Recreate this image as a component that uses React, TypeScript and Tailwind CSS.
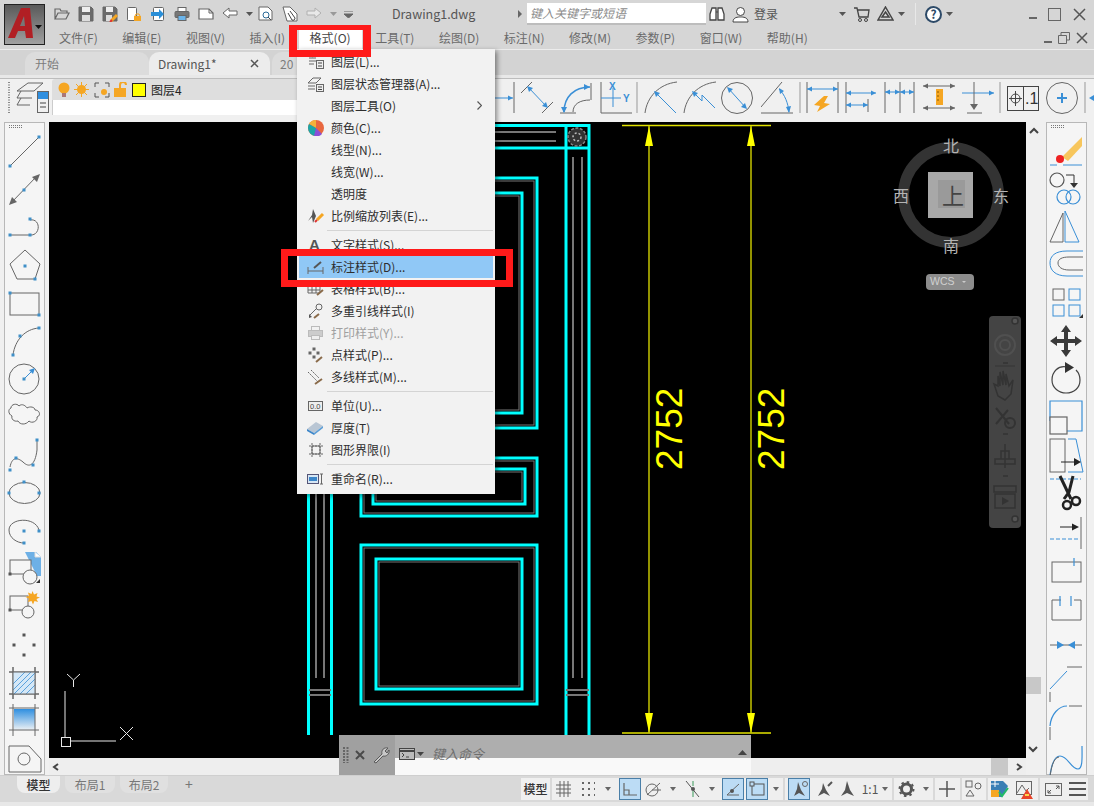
import React from "react";

const G = "#666666";
const B = "#3a8fd6";
const O = "#f5a623";

function H({ x, y, c = "#3f8fc8" }: { x: number; y: number; c?: string }) {
  return <rect x={x - 1.5} y={y - 1.5} width={3} height={3} fill={c} stroke="none" />;
}

function Ic({ w, h, children }: { w: number; h: number; children: React.ReactNode }) {
  return (
    <svg width={w} height={h} viewBox={`0 0 ${w} ${h}`} fill="none" stroke={G} strokeWidth={1} className="block shrink-0">
      {children}
    </svg>
  );
}

function Caret({ c = "#555" }: { c?: string }) {
  return (
    <svg width={7} height={4} viewBox="0 0 7 4" className="block shrink-0">
      <path d="M0 0H7L3.5 4Z" fill={c} />
    </svg>
  );
}

function ArrowH({ x1, x2, y, c = B, both = true }: { x1: number; x2: number; y: number; c?: string; both?: boolean }) {
  return (
    <g>
      <path d={`M${x1} ${y}H${x2}`} stroke={c} />
      <path d={`M${x2} ${y}l-5 -2.5v5Z`} fill={c} stroke="none" />
      {both && <path d={`M${x1} ${y}l5 -2.5v5Z`} fill={c} stroke="none" />}
    </g>
  );
}

const quick: React.ReactNode[] = [
  <Ic w={16} h={16}><path d="M1 13V3h5l1 2h6v2M1 13l3-6h11l-3 6Z" strokeWidth={1.2} /></Ic>,
  <Ic w={16} h={16}><path d="M1 1h12l2 2v12H1Z" fill="#6b6b6b" /><rect x={4} y={1} width={8} height={5} fill="#eee" stroke="none" /><rect x={4} y={9} width={8} height={6} fill="#ddd" stroke="none" /></Ic>,
  <Ic w={16} h={16}><path d="M1 1h12l2 2v12H1Z" fill="#6b6b6b" /><rect x={4} y={1} width={7} height={5} fill="#eee" stroke="none" /><rect x={4} y={9} width={6} height={6} fill="#ddd" stroke="none" /><path d="M9 15l6-6" stroke={O} strokeWidth={3} /><path d="M8 16l2-2" stroke="#d33" strokeWidth={2} /></Ic>,
  <Ic w={16} h={16}><rect x={1.5} y={1.5} width={9} height={13} rx={1} fill="#fff" /><path d="M8 10h7v5H8Z" fill={O} stroke="none" /><path d="M9 10l1-2h3l1 2" stroke={O} /></Ic>,
  <Ic w={16} h={16}><rect x={3.5} y={1.5} width={10} height={13} rx={1} fill="#fff" /><path d="M1 6h8V3l5 5-5 5v-3H1Z" fill="#2b8fd8" stroke="none" /></Ic>,
  <Ic w={16} h={16}><rect x={4} y={1.5} width={8} height={4} fill="#fff" /><rect x={1} y={5.5} width={14} height={6} rx={1} fill="#777" /><rect x={4} y={9.5} width={8} height={5} fill="#6bb4ea" stroke="#666" /></Ic>,
  <Ic w={16} h={16}><path d="M1 3h10l4 4v6H1Z" fill="#fff" strokeWidth={1.2} /><path d="M11 3v4h4" /></Ic>,
  <Ic w={16} h={16}><path d="M7 2L1 7l6 5V9h8V5H7Z" fill="#fff" /></Ic>,
];

function Pointer() {
  return (
    <svg width={4} height={8} viewBox="0 0 4 8" className="block shrink-0"><path d="M0 0L4 4L0 8Z" fill="#666" /></svg>
  );
}

const menuItems: { t?: string; kind?: string; y?: string; icon?: React.ReactNode; dis?: boolean; sub?: boolean; hi?: boolean }[] = [
  { t: "图层(L)...", icon: <Ic w={18} h={16}><path d="M2 4h7M2 7h7M2 10h5M5 3l4-2" /><rect x={9.5} y={6.5} width={7} height={8} fill="#eee" /><path d="M11 9h4M11 12h4" stroke="#444" /></Ic> },
  { t: "图层状态管理器(A)...", icon: <Ic w={18} h={16}><path d="M1 7l5-5h8l-5 5ZM1 10h7M1 13h7" /><rect x={9.5} y={8.5} width={7} height={7} fill="#eee" /><path d="M11 11h4M11 13.5h4" stroke="#444" /></Ic> },
  { t: "图层工具(O)", sub: true },
  { t: "颜色(C)...", icon: <svg width={16} height={16} viewBox="0 0 16 16" className="block"><circle cx={8} cy={8} r={8} fill="#e8673f" /><path d="M8 8L1 4A8 8 0 0 1 8 0Z" fill="#f3b13a" /><path d="M8 8V16A8 8 0 0 1 0 8A8 8 0 0 1 1 4Z" fill="#1ca6a8" /><path d="M8 8L14 14A8 8 0 0 1 6 16Z" fill="#8a4fd8" /></svg> },
  { t: "线型(N)..." },
  { t: "线宽(W)..." },
  { t: "透明度" },
  { t: "比例缩放列表(E)...", icon: <Ic w={18} h={16}><path d="M6 1L9 8L6 15L5 9L1 13L5 7Z" fill="#555" stroke="none" /><path d="M10 12l6-6" stroke={O} strokeWidth={3} /><path d="M8 14l2-2" stroke="#d33" strokeWidth={2} /></Ic> },
  { kind: "sep" },
  { t: "文字样式(S)...", icon: <Ic w={18} h={16}><text x={2} y={13} fontSize={15} fontWeight={700} fill="#555" stroke="none" fontFamily="Liberation Sans">A</text></Ic> },
  { t: "标注样式(D)...", hi: true, icon: <Ic w={18} h={16}><path d="M1 8v7M16 8v7M1 12h15" /><path d="M7 9l7-6" stroke="#555" strokeWidth={2} /></Ic> },
  { t: "表格样式(B)...", icon: <Ic w={18} h={16}><path d="M1 2h12v10H1ZM1 5.5h12M1 9h12M5 2v10M9 2v10" /><path d="M10 14l6-5" stroke="#8a6b4a" strokeWidth={2} /></Ic> },
  { t: "多重引线样式(I)", icon: <Ic w={18} h={16}><circle cx={12} cy={4} r={3} /><path d="M9 6L2 13" /><path d="M2 15v-4l3 3Z" fill="#555" stroke="none" /><path d="M7 15l5-4" stroke="#8a6b4a" strokeWidth={2} /></Ic> },
  { t: "打印样式(Y)...", dis: true, icon: <Ic w={18} h={16}><g stroke="#bbb"><rect x={4.5} y={1.5} width={8} height={4} /><rect x={1.5} y={5.5} width={14} height={6} fill="#ccc" /><rect x={4.5} y={10.5} width={8} height={4} fill="#eee" /></g></Ic> },
  { t: "点样式(P)...", icon: <Ic w={18} h={16}><H x={7} y={2} c="#666" /><H x={3} y={6} c="#666" /><H x={11} y={6} c="#666" /><H x={7} y={10} c="#666" /><path d="M9 15l6-5" stroke="#8a6b4a" strokeWidth={2} /></Ic> },
  { t: "多线样式(M)...", icon: <Ic w={18} h={16}><path d="M1 3l10 10M4 1l8 8" strokeDasharray="2 1" /><path d="M8 15l7-5" stroke="#8a6b4a" strokeWidth={2} /></Ic> },
  { kind: "sep" },
  { t: "单位(U)...", icon: <Ic w={16} h={12}><rect x={0.5} y={1.5} width={14} height={9} fill="#eee" /><text x={2} y={9} fontSize={7.5} fill="#444" stroke="none" fontFamily="Liberation Sans">0.0</text></Ic> },
  { t: "厚度(T)", icon: <svg width={17} height={14} viewBox="0 0 17 14" className="block"><path d="M0 8L9 1L16 5L7 12Z" fill="#b9c6d4" /><path d="M0 8V10L7 14V12Z" fill="#3c86c9" /><path d="M7 12V14L16 7V5Z" fill="#5b9dd6" /></svg> },
  { t: "图形界限(I)", icon: <Ic w={16} h={16}><rect x={4} y={4} width={8} height={8} /><path d="M4 1v14M12 1v14M1 4h14M1 12h14" strokeDasharray="2 1" /></Ic> },
  { kind: "sep" },
  { t: "重命名(R)...", icon: <Ic w={17} h={12}><rect x={0.5} y={1.5} width={11} height={9} fill="#d6e6f4" stroke="#557" /><rect x={2} y={4} width={8} height={4} fill="#3c86c9" stroke="none" /><path d="M13 1h3M13 11h3M14.500 1v10" /></Ic> },
];

function Menu() {
  return (
    <div className="absolute left-[297px] top-[49px] w-[198px] h-[445px] bg-[#f2f2f2] shadow-[2px_2px_5px_rgba(0,0,0,0.45)] pt-[2px] z-20">
      {menuItems.map((m, i) =>
        m.kind === "sep" ? (
          <div key={i} className="h-[1px] bg-[#d4d4d4] ml-[30px] mr-[2px] my-[3px]" />
        ) : (
          <div key={i} className={`relative flex items-center h-[22px] mx-[2px] text-[12px] ${m.hi ? "bg-[#90c8f6]" : ""} ${m.dis ? "text-[#a0a0a0]" : "text-[#2e2e2e]"}`}>
            <div className="w-[32px] flex justify-center pl-[1px] shrink-0">{m.icon}</div>
            <span className="whitespace-nowrap">{m.t}</span>
            {m.sub && (
              <svg width={5} height={9} viewBox="0 0 5 9" fill="none" stroke="#555" strokeWidth={1.2} className="absolute right-[11px] top-[6px] block"><path d="M.5 .5L4.500 4.500L.5 8.500" /></svg>
            )}
          </div>
        )
      )}
    </div>
  );
}

const leftIcons: React.ReactNode[] = [
  <><path d="M5 34L34 5" /><H x={5} y={34} /><H x={34} y={5} /></>,
  <><path d="M6 33L32 6" /><path d="M4 35l3-8 5 5Z M35 4l-8 3 5 5Z" fill={G} stroke="none" /><H x={19} y={20} /></>,
  <><path d="M5 27H25M25 12C36 10 36 28 25 27" /><H x={5} y={27} /><H x={25} y={27} /><H x={25} y={11} /></>,
  <><path d="M20 4L35 18L30 33H12L5 18Z" /><H x={20} y={20} /><H x={30} y={33} /></>,
  <><rect x={5} y={9} width={29} height={22} /><H x={5} y={9} /><H x={34} y={31} /></>,
  <><path d="M34 6C20 7 10 18 8 33" /><H x={34} y={6} /><H x={15} y={14} /><H x={8} y={33} /></>,
  <><circle cx={19} cy={19} r={15} /><path d="M19 19L29 9" stroke={B} /><path d="M30 8l-6 2 4 4Z" fill={B} stroke="none" /><H x={19} y={19} /></>,
  <path d="M6 10C6 6 12 5 14 8C17 5 21 8 22 10C25 8 30 9 30 12C35 12 36 18 32 19C33 23 27 26 24 23C21 27 15 27 13 23C9 24 6 21 7 18C3 16 3 11 6 10Z" />,
  <><path d="M5 35C7 25 12 25 18 30C24 36 30 34 32 18V8" transform="translate(0,-4)" /><H x={32} y={4} /><H x={11} y={22} /><H x={28} y={29} /><H x={5} y={34} /></>,
  <><ellipse cx={19.500} cy={19} rx={15.500} ry={10.500} /><H x={19} y={8} /><H x={4} y={19} /><H x={34} y={19} /></>,
  <><path d="M34 18C30 4 4 6 4 18C4 26 12 31 19 31" /><H x={19} y={19} /><H x={34} y={19} /><H x={19} y={31} /></>,
  <><path d="M20 2H31L36 7V26L32 26" fill="#6db0e6" stroke="none" /><path d="M30 2V7H36" fill="#fff" stroke="#ddd" /><rect x={5} y={10} width={21} height={14} fill="#f5f5f5" /><circle cx={25} cy={27} r={7} fill="#f5f5f5" /><H x={5} y={24} c="#555" /><path d="M35 33h-4l4-4Z" fill="#333" stroke="none" /></>,
  <><rect x={5} y={8} width={18} height={14} /><circle cx={23} cy={24} r={6} fill="#f5f5f5" /><H x={5} y={22} c="#555" /><path d="M27.500 3l1.500 3.500 3.500-1.500-1 3.500 3.500 1-3.500 1.500 1.500 3-3.500-1-1.500 3.500-1.500-3.500-3.500 1 1-3.500-3.500-1.500 3.500-1-1-3.500 3.500 1.500Z" fill={O} stroke="none" /></>,
  <><H x={19} y={9} c="#555" /><H x={9} y={19} c="#555" /><H x={29} y={19} c="#555" /><H x={19} y={29} c="#555" /></>,
  <><path d="M8 3V35M30 3V35M4 8H34M4 30H34" /><rect x={8} y={8} width={22} height={22} fill="#d5e8f7" stroke="none" /><path d="M8 20L20 8M8 26L26 8M9 30L30 9M15 30L30 15M21 30L30 21" stroke={B} strokeWidth={0.8} /><path d="M8 3V35M30 3V35M4 8H34M4 30H34" /></>,
  <><defs><linearGradient id="gr" x1="0" y1="0" x2="0" y2="1"><stop offset="0" stopColor="#2f8fe0" /><stop offset="1" stopColor="#f5f5f5" /></linearGradient></defs><rect x={9} y={7} width={21} height={22} fill="url(#gr)" stroke="none" /><path d="M8 2V34M30 2V34M4 6H34M4 28H34" /></>,
  <><path d="M4 6H24L36 19V32H4Z" /><circle cx={19} cy={19} r={6} /></>,
];

const rightIcons: React.ReactNode[] = [
  <><path d="M3 33H10M16 33H35" stroke={B} /><path d="M15 25L35 5V14L21 29Z" fill="#f7c65c" stroke="none" /><circle cx={13} cy={27} r={4} fill="#e22" stroke="none" /></>,
  <><circle cx={10} cy={10} r={7} strokeWidth={1.2} stroke="#555" /><path d="M19 5H27V14" stroke="#333" /><path d="M23 13h8l-4 5Z" fill="#333" stroke="none" /><circle cx={17} cy={27} r={7} stroke={B} strokeWidth={1.2} /><circle cx={26} cy={27} r={7} stroke={B} strokeWidth={1.2} /></>,
  <><path d="M3 34L16 5V34Z" /><path d="M18 3V34H32Z" stroke={B} /></>,
  <><path d="M36 5H20C8 5 3 10 3 17C3 24 8 30 20 30H36" stroke={B} /><path d="M36 11H22C15 11 11 13 11 17C11 21 15 24 22 24H36" /></>,
  <><rect x={6} y={5} width={11} height={11} /><rect x={22} y={5} width={11} height={11} stroke={B} /><rect x={6} y={21} width={11} height={11} stroke={B} /><rect x={22} y={21} width={11} height={11} stroke={B} /><path d="M36 34h-4l4-4Z" fill="#333" stroke="none" /></>,
  <><path d="M19 3L14 10H17V17H10V14L3 19L10 24V21H17V28H14L19 35L24 28H21V21H28V24L35 19L28 14V17H21V10H24Z" fill="#3a3a3a" stroke="none" /></>,
  <><path d="M20 7C11 5 5 12 5 20C5 28 12 33 19 33C27 33 33 28 33 20C33 16 31 12 29 10" stroke="#444" strokeWidth={1.200} /><path d="M18 2V13L27 7.500Z" fill="#333" stroke="none" /></>,
  <><path d="M3 23V3H35V33H19" stroke={B} strokeWidth={1.200} /><rect x={3} y={19} width={17} height={17} fill="#f5f5f5" strokeWidth={1.200} /></>,
  <><rect x={3} y={3} width={15} height={33} /><path d="M21 3H29L36 36H21" stroke={B} /><path d="M14 26H30" stroke="#222" /><path d="M34 26l-7-4v8Z" fill="#222" stroke="none" /></>,
  <><path d="M3 5H34" stroke={B} strokeDasharray="4 2" /><path d="M13 2L24 25M26 2L22 18L17 25" stroke="#222" strokeWidth={3} /><circle cx={20} cy={31} r={4} stroke="#222" strokeWidth={2.500} /><circle cx={29} cy={27} r={4} stroke="#222" strokeWidth={2.500} /></>,
  <><path d="M3 27H33" stroke={B} strokeDasharray="4 2" /><path d="M13 15H28" stroke="#222" /><path d="M32 15l-7-3.500v7Z" fill="#222" stroke="none" /><path d="M34 5V37" /></>,
  <><rect x={5} y={12} width={29} height={20} /><path d="M27 8V16" stroke={B} strokeWidth={1.200} /></>,
  <><path d="M14 12H5V32H34V12H27" /><path d="M13 8V18M24 8V18" stroke={B} strokeWidth={1.200} /></>,
  <><path d="M3 19H35" /><path d="M10 15l7 4-7 4ZM28 15l-7 4 7 4Z" fill={B} stroke="none" /></>,
  <><path d="M3 28V39" /><path d="M3 25L20 7" stroke={B} /><path d="M20 3H35" /></>,
  <><path d="M3 25V38" /><path d="M3 24C4 12 12 4 20 4" stroke={B} strokeWidth={1.200} /><path d="M22 4H35" /></>,
  <><path d="M3 36C4 28 6 16 13 16C21 16 24 29 31 29C36 29 35 16 35 6" stroke={B} strokeWidth={1.200} /><path d="M3 37C4 29 6 18 12 17" /></>,
];

function Grip() {
  return (
    <svg width={14} height={3} viewBox="0 0 14 3" className="block ml-[4px] mt-[2px]">
      <path d="M0 .5H14M0 2.500H14" stroke="#777" strokeDasharray="1 1" />
    </svg>
  );
}

function Toolbar({ icons }: { icons: React.ReactNode[] }) {
  return (
    <div className="w-[41px] h-[653px] bg-[#f5f5f5] border border-[#b8b8b8] shrink-0">
      <div className="h-[7px]"><Grip /></div>
      {icons.map((n, i) => (
        <Ic key={i} w={39} h={38}>{n}</Ic>
      ))}
    </div>
  );
}

const ribbon: [number, React.ReactNode][] = [
  [26, <><ArrowH x1={0} x2={18} y={19} both={false} /><path d="M19 3V34" /></>],
  [39, <><path d="M0 14L11 3M21 34L32 23" /><path d="M7 8L26 28" stroke={B} /><path d="M6 7l6 2-4 4ZM27 29l-6-2 4-4Z" fill={B} stroke="none" /></>],
  [40, <><path d="M4 33C4 18 14 8 30 8" stroke={B} strokeWidth={1.500} /><path d="M13 33C13 25 20 21 30 21M31 4V21M0 34H16" /><path d="M30 8l-6-3v6ZM4 34l-3-6h6Z" fill={B} stroke="none" /></>],
  [44, <><path d="M1 3V34H32" /><path d="M13 9V28M1 19H21" stroke={B} /><text x={9} y={11} fontSize={10} fontWeight={700} fill={B} stroke="none" fontFamily="Liberation Sans">X</text><text x={23} y={23} fontSize={10} fontWeight={700} fill={B} stroke="none" fontFamily="Liberation Sans">Y</text><path d="M37 3V34" stroke="#999" /></>],
  [39, <><path d="M1 34C3 18 15 5 33 3" /><path d="M11 13L32 34" stroke={B} /><path d="M10 12l6 2-4 4Z" fill={B} stroke="none" /></>],
  [38, <><path d="M1 34C3 18 15 5 33 3" /><path d="M10 13L19 22L19 16L32 29" stroke={B} /><path d="M9 12l6 2-4 4Z" fill={B} stroke="none" /></>],
  [40, <><circle cx={16} cy={19} r={15.500} /><path d="M7 9L25 29" stroke={B} /><path d="M6 8l6 2-4 4ZM26 30l-6-2 4-4Z" fill={B} stroke="none" /></>],
  [45, <><path d="M0 28L21 3M0 34H32" /><path d="M18 10C24 16 27 24 28 33" stroke={B} /><path d="M18 9l1 6 4-3ZM28 34l-3-6 5-1Z" fill={B} stroke="none" /><path d="M39 3V34" stroke="#999" /></>],
  [39, <><path d="M1 3V34M32 3V34" /><ArrowH x1={1} x2={32} y={10} /><path d="M18 17L8 26L14 27L11 33L24 25L18 24L22 17Z" fill={O} stroke="none" /></>],
  [39, <><path d="M1 3V34M23 20V33" /><ArrowH x1={1} x2={31} y={14} /><ArrowH x1={1} x2={23} y={26} /></>],
  [39, <><path d="M1 3V34M16 3V34M30 3V34" /><ArrowH x1={1} x2={16} y={13} /><ArrowH x1={16} x2={30} y={13} /></>],
  [39, <><ArrowH x1={0} x2={32} y={7} c="#666" /><ArrowH x1={0} x2={32} y={29} c="#666" /><rect x={13} y={10} width={7} height={16} fill={O} stroke="none" /><path d="M14 13h2M14 17h2M14 21h2" stroke="#8a5a00" /></>],
  [45, <><ArrowH x1={0} x2={32} y={14} both={false} /><path d="M12 3V26" /><path d="M12 31l-4-6h8Z" fill={G} stroke="none" /><path d="M5 34H20" /><path d="M38 3V34" stroke="#999" /></>],
  [39, <><rect x={0.500} y={7.500} width={31} height={24} stroke="#444" /><path d="M16.500 8V31" stroke="#444" /><circle cx={8.500} cy={19.500} r={4.500} stroke="#444" /><path d="M8.500 12V27M2 19.500H15" stroke="#444" /><text x={18} y={25} fontSize={16} fill="#333" stroke="none" fontFamily="Liberation Sans">.1</text></>],
  [41, <><circle cx={16} cy={19} r={15.500} /><path d="M16 14V24M11 19H21" stroke={B} strokeWidth={2} /><path d="M39 3V34" stroke="#999" /></>],
  [7, <path d="M2 19l5-3v6Z" fill={B} stroke="none" />],
];

function Canvas() {
  const cy = "#00ffff";
  const rect = (x: number, y: number, w: number, h: number, k: number) => (
    <g key={`${x}-${y}`}>
      <rect x={x} y={y} width={w} height={h} stroke={cy} strokeWidth={3} fill="none" />
      <rect x={x + k} y={y + k} width={w - 2 * k} height={h - 2 * k} stroke="#777" strokeWidth={1} fill="none" />
    </g>
  );
  return (
    <svg viewBox="49 122 977 636" width={977} height={636} className="block" fontFamily="'Noto Sans CJK SC', sans-serif">
      <rect x={49} y={122} width={977} height={636} fill="#000" />
      {/* door frame */}
      <g fill="none">
        <path d="M400 125.500H589V735M566 125V735M400 148H589M308.500 400V735M331.500 400V735" stroke={cy} strokeWidth={3} />
        <path d="M400 132H556M400 141H556M573 157V678M582 157V678M316 480V678M324 480V678M566 690H589M566 695H589M309 690H331M309 695H331" stroke="#777" strokeWidth={2} />
        <circle cx={577} cy={137} r={9} stroke="#888" strokeWidth={1.500} strokeDasharray="3 1.500" fill="#333" />
        <circle cx={577} cy={137} r={4} stroke="#bbb" strokeWidth={1.500} strokeDasharray="2 2" />
        {rect(361, 178, 176, 250, 3)}
        {rect(376, 193, 146, 220, 3)}
        {rect(361, 458, 176, 58, 3)}
        {rect(373, 469, 152, 35, 3)}
        {rect(361, 545, 176, 159, 3)}
        {rect(376, 559, 146, 130, 3)}
      </g>
      {/* dimensions */}
      <path d="M622 125.500H771M622 733H771" stroke="#e2e200" strokeWidth={1.500} />
      <path d="M649 126V733M751 126V733" stroke="#c4c400" strokeWidth={1.500} />
      <path d="M649 126l-4 20h8ZM751 126l-4 20h8ZM649 733l-4-20h8ZM751 733l-4-20h8Z" fill="#ffff00" />
      <text transform="translate(682 470) rotate(-90)" fontSize={37} fill="#ffff00" fontFamily="'Liberation Sans', sans-serif">2752</text>
      <text transform="translate(784 470) rotate(-90)" fontSize={37} fill="#ffff00" fontFamily="'Liberation Sans', sans-serif">2752</text>
      {/* view cube */}
      <circle cx={951} cy={195} r={47.500} stroke="#333" strokeWidth={11} fill="none" />
      <rect x={928} y={172} width={45} height={46} fill="#a8a8a8" />
      <rect x={938} y={180} width={27} height={28} fill="#9a9a9a" />
      <text x={942} y={204} fontSize={22} fill="#444">上</text>
      <g fontSize={16} fill="#b4b4b4" textAnchor="middle">
        <text x={951} y={152}>北</text>
        <text x={951} y={252}>南</text>
        <text x={901} y={202}>西</text>
        <text x={1001} y={202}>东</text>
      </g>
      <rect x={926} y={274} width={48} height={16} rx={4} fill="#8c8c8c" />
      <text x={930} y={285} fontSize={10.500} fill="#d0d0d0" fontFamily="'Liberation Sans', sans-serif">WCS</text>
      <path d="M962 281h4l-2 2Z" fill="#ccc" />
      {/* UCS */}
      <g stroke="#e8e8e8" strokeWidth={1} fill="none">
        <path d="M65 691V737M71 741H116" />
        <rect x={61.500} y={737.500} width={9} height={9} />
        <path d="M120 727L133 740M133 727L120 740M67 674L73.500 680L80 674M73.500 680V687" />
      </g>
    </svg>
  );
}

function NavBar() {
  return (
    <div className="absolute left-[940px] top-[194px] w-[32px] h-[212px] bg-[#444444] rounded-[4px]">
      <svg width={32} height={212} viewBox="0 0 32 212" fill="none" stroke="#2d2d2d" strokeWidth={1.500}>
        <circle cx={26} cy={5} r={3} fill="#555" stroke="#333" />
        <circle cx={16} cy={29} r={10} stroke="#505050" strokeWidth={2} />
        <circle cx={16} cy={29} r={5} stroke="#505050" strokeWidth={2} />
        <path d="M14 47h5" stroke="#333" />
        <path d="M6 50H26" stroke="#3a3a3a" />
        <path d="M9 80L5 68L9 70V60L11 70V56L14 69V55L17 69V58L20 70L24 64L22 78L16 84Z" stroke="#333" fill="#444" />
        <path d="M7 92L20 108M7 108L19 94" stroke="#333" strokeWidth={2} />
        <circle cx={21} cy={107} r={5} stroke="#333" strokeWidth={2} />
        <path d="M14 118h5" stroke="#333" />
        <path d="M16 128V152M6 143H26V148H6ZM12 135H20V143H12Z" stroke="#333" />
        <path d="M14 160h5" stroke="#333" />
        <rect x={5} y={170} width={22} height={6} stroke="#333" />
        <rect x={6} y={178} width={20} height={14} stroke="#333" />
        <path d="M13 181l7 4-7 4Z" fill="#333" stroke="none" />
        <circle cx={26} cy={203} r={3} fill="#555" stroke="#333" />
      </svg>
    </div>
  );
}

function CommandLine() {
  return (
    <div className="absolute left-[339px] top-[735px] w-[412px] h-[40px] flex z-10">
      <div className="w-[56px] h-full bg-[#a0a0a0] flex items-start pt-[12px] pl-[4px] gap-[6px]">
        <svg width={6} height={16} viewBox="0 0 6 16"><path d="M1 0V16M4.500 0V16" stroke="#666" strokeWidth={2} strokeDasharray="2 1" /></svg>
        <svg width={10} height={10} viewBox="0 0 10 10" className="mt-[3px]"><path d="M1 1L9 9M9 1L1 9" stroke="#4a4a4a" strokeWidth={2} /></svg>
        <svg width={17} height={17} viewBox="0 0 17 17" className="ml-[2px]" fill="none"><path d="M1 15L9 7C8 3 11 0 15 1L12 4L14 6L16 3C17 7 13 10 10 9L3 16Z" stroke="#5a5a5a" fill="#c8c8c8" /></svg>
      </div>
      <div className="flex-1 flex flex-col">
        <div className="h-[23px] bg-[#aeaeae] flex items-start pt-[12px] pl-[4px] relative">
          <svg width={16} height={12} viewBox="0 0 16 12" className="mt-[1px] shrink-0" fill="none"><rect x={.5} y={.5} width={15} height={11} stroke="#444" fill="#bbb" /><path d="M.5 3H15.500" stroke="#444" strokeWidth={2} /><path d="M3 5l2 2-2 2M7 9h3" stroke="#444" /></svg>
          <div className="mt-[5px] ml-[2px]"><Caret c="#444" /></div>
          <span className="ml-[8px] -mt-[3px] text-[13px] italic text-[#6e6e6e] whitespace-nowrap">键入命令</span>
          <div className="absolute right-[4px] top-[15px]"><svg width={9} height={5} viewBox="0 0 9 5"><path d="M0 5L4.500 0L9 5Z" fill="#444" /></svg></div>
        </div>
        <div className="flex-1 bg-[#f9f9f9]" />
      </div>
    </div>
  );
}

const Chev = ({ d }: { d: string }) => (
  <svg width={10} height={8} viewBox="0 0 10 8" fill="none" stroke="#444" strokeWidth={2} className="block"><path d={d} /></svg>
);

function Cell({ w, hi, children }: { w: number; hi?: [number, number]; children?: React.ReactNode }) {
  return (
    <svg width={w} height={22} viewBox={`0 0 ${w} 22`} fill="none" stroke={G} className="block shrink-0">
      {hi && <rect x={hi[0] + 0.500} y={0.500} width={hi[1] - hi[0] - 1} height={21} fill="#bcdcf5" stroke="#4a7fa8" />}
      {children}
    </svg>
  );
}

function TinyCaret({ x }: { x: number }) {
  return <path d={`M${x - 3} 9h6l-3 4Z`} fill="#666" stroke="none" />;
}

function Status() {
  return (
    <div className="flex items-center gap-[1px] absolute left-[521px] top-[2px]">
      <div className="w-[29px] h-[22px] bg-[#f0f0f0] text-[12px] font-medium text-[#333] flex items-center justify-center mr-[1px] whitespace-nowrap">模型</div>
      <div className="flex h-[22px] bg-[#efefef] mr-[1px]">
        <Cell w={26}><path d="M4 7H19M4 11H19M4 15H19M8 3V19M12 3V19M16 3V19" /></Cell>
        <Cell w={23}><path d="M4 5H17M4 11H17M4 17H17" strokeDasharray="2 4" strokeWidth={2} /></Cell>
        <Cell w={14}><TinyCaret x={7} /></Cell>
        <Cell w={28} hi={[4, 26]}><path d="M9 5V17H22M9 12H14V17" strokeWidth={1.200} /></Cell>
        <Cell w={24}><circle cx={9} cy={12} r={6} /><path d="M4 17L17 5M9 12H18" /></Cell>
        <Cell w={14}><TinyCaret x={6} /></Cell>
        <Cell w={25}><path d="M5 3L18 19" stroke="#555" /><path d="M12 3V8M12 13V19" stroke="#3a9a5a" /><circle cx={12} cy={11} r={2} fill="#555" stroke="none" /></Cell>
        <Cell w={13}><TinyCaret x={6} /></Cell>
        <Cell w={26} hi={[3, 25]}><path d="M8 17L20 6M8 17H20" /><circle cx={13} cy={13} r={2} fill="#555" stroke="none" /></Cell>
        <Cell w={24} hi={[1, 23]}><rect x={7} y={6} width={12} height={11} stroke="#555" /><rect x={5} y={4} width={4} height={4} fill="#bcdcf5" stroke="#555" /></Cell>
        <Cell w={14}><TinyCaret x={7} /></Cell>
      </div>
      <div className="flex h-[22px] bg-[#efefef] mr-[1px]">
        <Cell w={27} hi={[3, 25]}><path d="M13 4L16 12L20 18L14 15L9 18L12 11Z" fill="#555" stroke="none" /><circle cx={20} cy={6} r={2.500} /></Cell>
        <Cell w={23}><path d="M11 5L14 12L18 18L12 15L6 18L10 11Z" fill="#555" stroke="none" /><path d="M16 8L20 4" stroke="#555" strokeWidth={2} /></Cell>
        <Cell w={24}><path d="M12 3L15 12L19 18L12 15L6 18L10 12Z" fill="#555" stroke="none" /></Cell>
        <div className="w-[22px] text-[12px] text-[#555] flex items-center justify-center">1:1</div>
        <Cell w={11}><TinyCaret x={4} /></Cell>
      </div>
      <div className="flex h-[22px] bg-[#efefef] mr-[1px]">
        <Cell w={39}><circle cx={12.500} cy={11} r={5} stroke="#555" strokeWidth={3} /><circle cx={12.500} cy={11} r={7} stroke="#555" strokeWidth={2} strokeDasharray="2.500 3" /><TinyCaret x={32} /></Cell>
      </div>
      <div className="flex h-[22px] bg-[#efefef] mr-[1px]">
        <Cell w={25}><path d="M12 3V19M4 11H20" stroke="#555" strokeWidth={1.500} /></Cell>
      </div>
      <div className="flex h-[22px] bg-[#efefef] mr-[1px]">
        <Cell w={24}><rect x={4} y={3} width={6} height={6} /><circle cx={16} cy={8} r={3} /><path d="M8 12L12 18H4Z" /></Cell>
      </div>
      <div className="flex h-[22px] bg-[#efefef] mr-[1px]">
        <Cell w={50}>
          <path d="M3 3H15L20 8L14 19H3Z" fill="#3a7fb5" stroke="none" /><path d="M3 12H11V19H3Z" fill={O} stroke="none" /><path d="M11 14L14 18L20 10" stroke="#2b6" strokeWidth={2} /><path d="M7 2V9M3 6H11" stroke="#fff" />
          <rect x={28.500} y={3.500} width={15} height={13} /><path d="M29 15L34 7L38 13L41 10" />
          <path d="M39 11L45 21H33Z" fill="#e8442a" stroke="none" /><path d="M37 16h4v2h-4Z" fill="#ffd34d" stroke="none" />
        </Cell>
      </div>
      <div className="flex h-[22px] bg-[#efefef]">
        <Cell w={48}>
          <rect x={5.500} y={5.500} width={16} height={12} /><path d="M8 15L11 12M8 15V12M8 15H11M19 8L16 11M19 8H16M19 8V11" stroke="#555" />
          <path d="M29 5H46M29 11H46M29 17H46" stroke="#555" strokeWidth={2} />
        </Cell>
      </div>
    </div>
  );
}

export default function App() {
  return (
    <div className="relative w-[1094px] h-[806px] overflow-hidden bg-[#d6d6d6] font-['Noto_Sans_CJK_SC','Liberation_Sans',sans-serif] flex flex-col">
      {/* header */}
      <header className="h-[49px] flex shrink-0">
        <div className="relative ml-[4px] mt-[4px] w-[41px] h-[41px] border border-[#222] bg-gradient-to-b from-[#5a5a5a] to-[#a0a0a0] shrink-0">
          <svg width={39} height={39} viewBox="0 0 39 39" className="block">
            <path d="M3 33L16 3H25L28 33H21L20 26H13L10 33Z" fill="#b11f24" />
            <path d="M15 21H20L19 11Z" fill="#777" />
            <path d="M30 20h7l-3.500 4Z" fill="#111" />
          </svg>
        </div>
        <div className="flex-1 flex flex-col ml-[9px]">
          <div className="h-[28px] flex items-center relative">
            <div className="flex items-center gap-[8px]">
              {quick.map((q, i) => (<div key={i}>{q}</div>))}
              <Caret />
              <div className="-ml-[3px]"><Ic w={16} h={16}><path d="M1 1h9l4 4v9H1Z" fill="#fff" /><circle cx={8} cy={9} r={3} stroke="#2b6b99" /><path d="M10 11l3 3" stroke="#444" /></Ic></div>
              <Ic w={16} h={16}><path d="M1 1h7l7 7v7H5Z" fill="#fff" /><path d="M8 5l5 7a2 2 0 0 1-3 2L6 7" stroke="#444" /></Ic>
              <Ic w={16} h={16}><path d="M9 2l6 5-6 5V9H1V5h8Z" fill="#e8e8e8" stroke="#b0b0b0" /></Ic>
              <Caret c="#999" />
              <svg width={9} height={7} viewBox="0 0 9 7" className="block shrink-0 -ml-[1px]"><path d="M0 0h9M0 3h9l-4.500 4Z" stroke="#666" fill="#666" /></svg>
            </div>
            <span className="ml-[39px] w-[126px] text-[12.500px] text-[#555] whitespace-nowrap">Drawing1.dwg</span>
            <Pointer />
            <div className="ml-[5px] w-[179px] h-[22px] bg-white border-b-2 border-[#bdbdbd] text-[12px] italic text-[#8a8a8a] flex items-center pl-[3px] whitespace-nowrap shrink-0">键入关键字或短语</div>
            <div className="ml-[3px]"><Ic w={16} h={16}><path d="M1 8L3 2H7V14H1ZM9 14V2H13L15 8V14H9Z" fill="#fff" strokeWidth={1.300} stroke="#444" /><path d="M7 6H9" stroke="#444" /></Ic></div>
            <div className="ml-[7px]"><Ic w={17} h={17}><circle cx={8.500} cy={5.500} r={4} fill="#fff" stroke="#444" /><path d="M1 16C1 11 6 11 8.500 11C11 11 16 11 16 16Z" fill="#fff" stroke="#444" /></Ic></div>
            <span className="ml-[5px] text-[12px] text-[#555] whitespace-nowrap w-[85px]">登录</span>
            <Caret />
            <div className="ml-[7px]"><Ic w={17} h={16}><path d="M1 2H4L6 11H15L16 4H5" stroke="#444" strokeWidth={1.300} /><circle cx={7} cy={14} r={1.500} stroke="#444" /><circle cx={13} cy={14} r={1.500} stroke="#444" /></Ic></div>
            <div className="ml-[7px]"><Ic w={17} h={16}><path d="M8.500 1L16 14H1Z M8.500 6L12 11H5Z" stroke="#444" strokeWidth={1.500} /></Ic></div>
            <div className="ml-[4px]"><Caret /></div>
            <div className="ml-[10px] w-[1px] h-[22px] bg-[#e8e8e8]" />
            <div className="ml-[9px] w-[17px] h-[17px] rounded-full border-2 border-[#2d4a68] bg-white text-[#2d4a68] text-[12px] font-bold flex items-center justify-center leading-none">?</div>
            <div className="ml-[4px]"><Caret /></div>
            <div className="ml-auto mr-[8px] flex items-center gap-[10px]">
              <svg width={9} height={10} viewBox="0 0 9 10" className="block"><path d="M0 9H8" stroke="#666" strokeWidth={2} /></svg>
              <svg width={13} height={13} viewBox="0 0 13 13" className="block"><rect x={.5} y={.5} width={12} height={12} fill="none" stroke="#666" /></svg>
              <svg width={13} height={13} viewBox="0 0 13 13" className="block ml-[2px]"><path d="M1 1L12 12M12 1L1 12" stroke="#555" strokeWidth={1.500} /></svg>
            </div>
          </div>
          <div className="h-[21px] flex items-start pl-[5px] relative">
            <nav className="flex gap-[24.5px] text-[12px] text-[#6a6a6a] leading-[20px] whitespace-nowrap">
              {["文件(F)", "编辑(E)", "视图(V)", "插入(I)", "格式(O)", "工具(T)", "绘图(D)", "标注(N)", "修改(M)", "参数(P)", "窗口(W)", "帮助(H)"].map((t) =>
                t === "格式(O)" ? (
                  <span key={t} className="bg-white -mx-[11px] px-[11px] text-[#444] h-[21px]">{t}</span>
                ) : (
                  <span key={t}>{t}</span>
                )
              )}
            </nav>
            <div className="ml-auto mr-[6px] mt-[4px] flex items-center gap-[6px]">
              <svg width={8} height={10} viewBox="0 0 8 10" className="block"><path d="M0 9H8" stroke="#666" strokeWidth={2} /></svg>
              <svg width={12} height={12} viewBox="0 0 12 12" className="block" fill="none" stroke="#666"><path d="M3 3V.5H11.500V8H8.500M.5 3.500H8.500V11.500H.5Z" /></svg>
              <svg width={12} height={12} viewBox="0 0 12 12" className="block"><path d="M1 1L11 11M11 1L1 11" stroke="#555" strokeWidth={1.500} /></svg>
            </div>
          </div>
        </div>
      </header>

      {/* document tabs */}
      <div className="h-[30px] shrink-0 bg-[#e8e8e8] border-b border-[#bdbdbd]">
        <div className="h-[26px] bg-[#d3d3d3] flex items-end text-[12px] pl-[25px] border-t border-[#ececec]">
          <div className="w-[124px] h-[23px] rounded-t-[10px] bg-[#dcdcdc] text-[#7c7c7c] flex items-center pl-[10px]">开始</div>
          <div className="w-[121px] h-[23px] rounded-t-[10px] bg-[#ececec] text-[#555] flex items-center pl-[9px] justify-between pr-[11px]">
            <span>Drawing1*</span>
            <svg width={9} height={9} viewBox="0 0 9 9" className="block"><path d="M1 1L8 8M8 1L1 8" stroke="#555" strokeWidth={1.500} /></svg>
          </div>
          <div className="w-[70px] h-[23px] ml-[2px] rounded-t-[10px] bg-[#dcdcdc] text-[#7c7c7c] flex items-center pl-[8px]">20</div>
        </div>
      </div>

      {/* ribbon */}
      <div className="h-[43px] shrink-0 bg-[#f0f0f0] flex items-start">
        <svg width={3} height={32} viewBox="0 0 3 32" className="ml-[8px] mt-[3px] shrink-0"><path d="M1 0V32" stroke="#888" strokeWidth={2} strokeDasharray="1 1.500" /></svg>
        <div className="ml-[5px] shrink-0">
          <Ic w={33} h={38}>
            <path d="M1 12L12 4H27L18 12ZM1 19H16M1 26H14M5 12L1 19M5 19L1 26" />
            <rect x={22} y={13} width={10} height={7} fill="#2f8fe0" stroke="none" />
            <rect x={21.500} y={12.500} width={11} height={21} />
            <path d="M24 24H30M24 28H30" stroke="#444" />
          </Ic>
        </div>
        <div className="ml-[3px] w-[443px] shrink-0">
          <div className="h-[21px] bg-[#dedede] rounded-t-[3px] flex items-center pl-[6px]">
            <svg width={12} height={16} viewBox="0 0 12 16" className="block"><circle cx={6} cy={6} r={5.500} fill={O} /><rect x={4} y={11} width={4} height={4} fill="#a77" /></svg>
            <svg width={15} height={15} viewBox="0 0 15 15" className="block ml-[4px]"><circle cx={7.500} cy={7.500} r={4.500} fill={O} /><path d="M7.500 0V15M0 7.500H15M2 2L13 13M13 2L2 13" stroke={O} /></svg>
            <svg width={16} height={16} viewBox="0 0 16 16" className="block ml-[5px]" fill="none"><path d="M1 5V1H5M11 1H15V5M15 11V15H11M5 15H1V11" stroke="#555" /><circle cx={10} cy={10} r={3} fill={O} /></svg>
            <svg width={13} height={15} viewBox="0 0 13 15" className="block ml-[4px]" fill="none"><rect y={6} width={12} height={9} fill={O} /><path d="M6 6V3A3 3 0 0 1 12 3" stroke={O} strokeWidth={2} /></svg>
            <div className="w-[14px] h-[14px] bg-[#ffff00] border border-[#222] ml-[5px]" />
            <span className="ml-[5px] text-[12px] text-[#222]">图层4</span>
          </div>
          <div className="h-[15px] bg-white border-l border-[#ccc]" />
        </div>
        <div className="flex shrink-0">
          {ribbon.map(([w, n], i) => (
            <Ic key={i} w={w} h={38}>{n}</Ic>
          ))}
        </div>
      </div>

      {/* main */}
      <main className="flex-1 flex bg-[#f0f0f0] min-h-0">
        <div className="ml-[4px] mr-[4px]"><Toolbar icons={leftIcons} /></div>
        <div className="w-[977px] shrink-0 flex flex-col relative">
          <Canvas />
          <NavBar />
          <div className="h-[17px] bg-[#eeeeee] relative flex items-center pl-[3px]">
            <Chev d="M6 1L2 4L6 7" />
            <div className="absolute left-[942px] top-0 w-[17px] h-[17px] bg-[#c8c8c8]" />
            <div className="absolute left-[965px] top-[5px]"><Chev d="M3 1L7 4L3 7" /></div>
          </div>
        </div>
        <div className="w-[20px] shrink-0 relative flex flex-col items-center pt-[5px] pr-[5px]">
          <Chev d="M1 6L5 2L9 6" />
          <div className="absolute left-0 top-[555px] w-[15px] h-[17px] bg-[#c8c8c8]" />
          <div className="absolute left-[2px] top-[623px]"><Chev d="M1 2L5 6L9 2" /></div>
        </div>
        <Toolbar icons={rightIcons} />
      </main>

      {/* status */}
      <footer className="h-[31px] shrink-0 bg-[#d9d9d9] relative border-t border-[#cfcfcf]">
        <div className="flex items-start text-[12px] pl-[17px] gap-[5px]">
          <div className="w-[43px] h-[17px] bg-[#eeeeee] rounded-b-[8px] text-center leading-[17px] text-[#333] font-medium">模型</div>
          <div className="w-[50px] h-[17px] bg-[#e0e0e0] rounded-b-[8px] text-center leading-[17px] text-[#777]">布局1</div>
          <div className="w-[48px] h-[17px] bg-[#e0e0e0] rounded-b-[8px] text-center leading-[17px] text-[#777]">布局2</div>
          <span className="ml-[12px] text-[#777] leading-[17px] text-[14px]">+</span>
        </div>
        <Status />
        <div className="absolute left-0 right-0 bottom-0 h-[4px] bg-[#e8e8e8]" />
      </footer>

      {/* overlays */}
      <CommandLine />
      <Menu />
      <div className="absolute left-[289px] top-[25px] w-[82px] h-[32px] border-t-[5px] border-x-[8px] border-b-[7px] border-[#ff1a1a] z-30" />
      <div className="absolute left-[281px] top-[249px] w-[232px] h-[38px] border-[7px] border-[#ff1a1a] z-30" />
    </div>
  );
}
